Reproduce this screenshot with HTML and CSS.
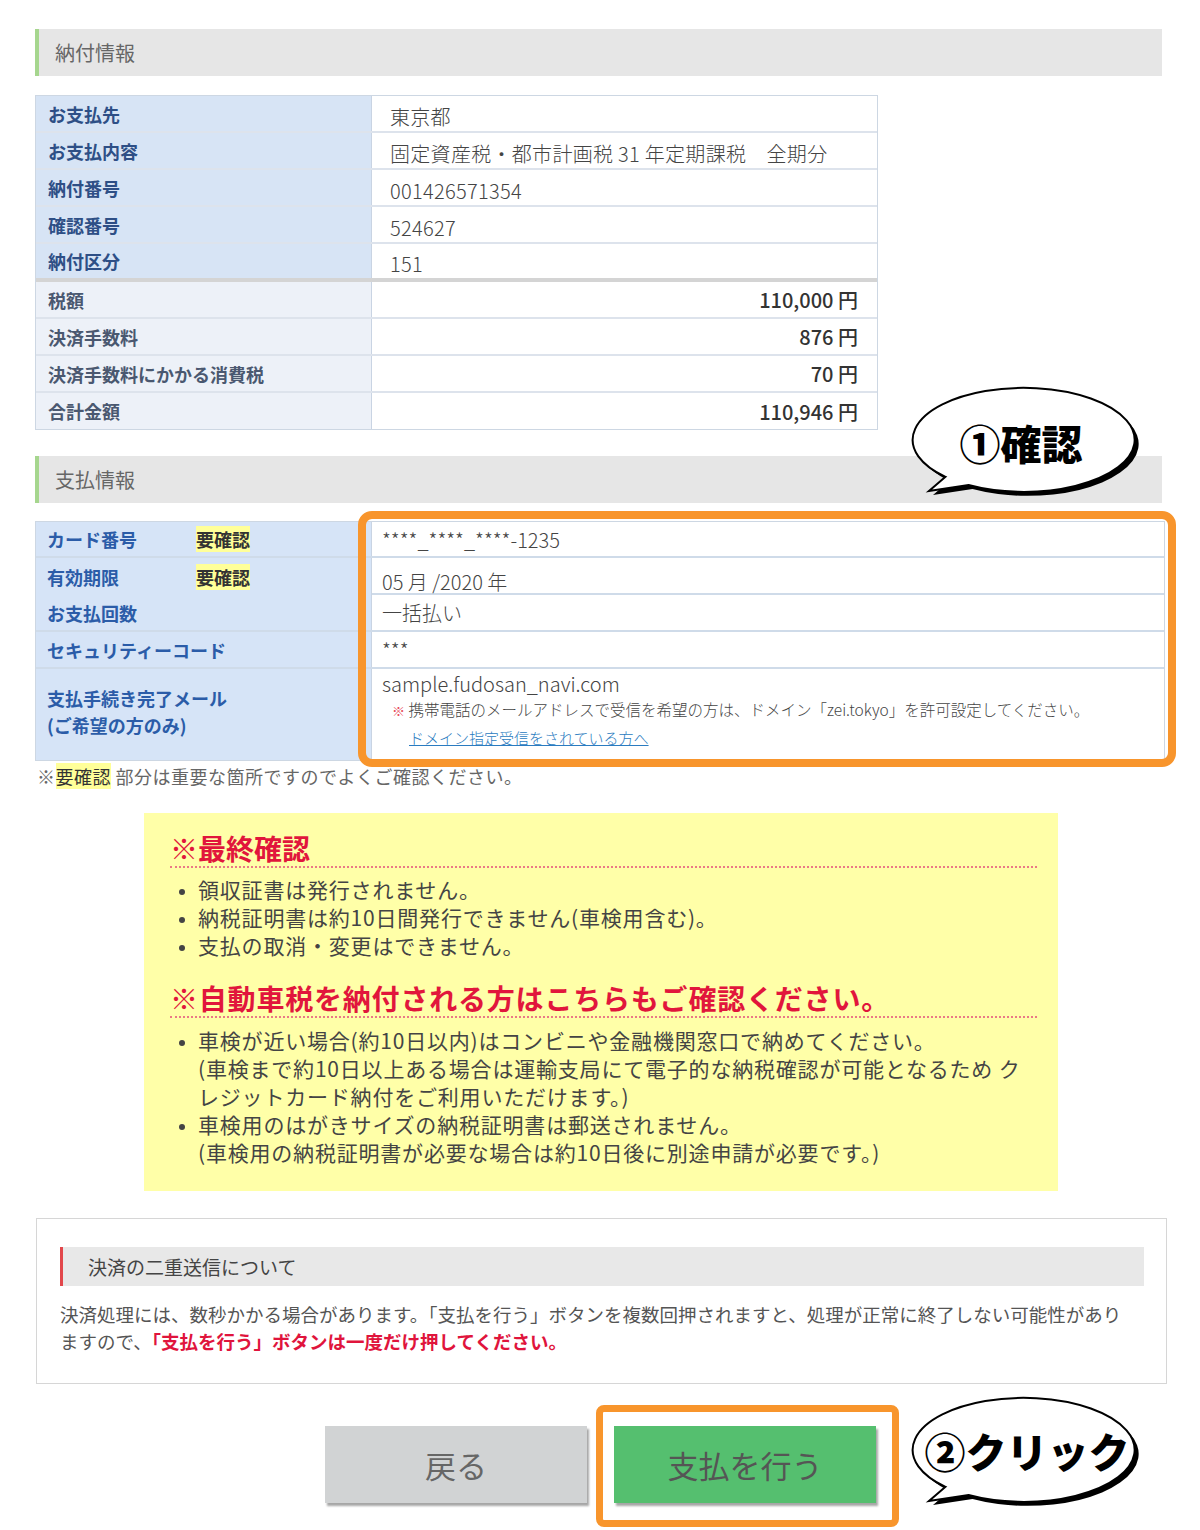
FILE: index.html
```html
<!DOCTYPE html>
<html lang="ja">
<head>
  <meta charset="UTF-8" />
  <meta name="viewport" content="width=device-width, initial-scale=1.0" />
  <title>お支払い内容の確認</title>
  <link rel="stylesheet" href="styles.css">
</head>
<body>
<div class="page">

  <h2 class="sec-title">納付情報</h2>
  <div class="info">
    <div class="row"><div class="key">お支払先</div><div class="val">東京都</div></div>
    <div class="row"><div class="key">お支払内容</div><div class="val">固定資産税・都市計画税 31 年定期課税　全期分</div></div>
    <div class="row"><div class="key">納付番号</div><div class="val">001426571354</div></div>
    <div class="row"><div class="key">確認番号</div><div class="val">524627</div></div>
    <div class="row split"><div class="key">納付区分</div><div class="val">151</div></div>
    <div class="row sum"><div class="key">税額</div><div class="val">110,000 円</div></div>
    <div class="row sum"><div class="key">決済手数料</div><div class="val">876 円</div></div>
    <div class="row sum"><div class="key">決済手数料にかかる消費税</div><div class="val">70 円</div></div>
    <div class="row sum end"><div class="key">合計金額</div><div class="val">110,946 円</div></div>
  </div>

  <h2 class="sec-title second">支払情報</h2>
  <div class="pay-wrap">
    <div class="card">
      <div class="row r1"><div class="key"><span class="name">カード番号</span><span class="must">要確認</span></div><div class="val">****_****_****-1235</div></div>
      <div class="row"><div class="key"><span class="name">有効期限</span><span class="must">要確認</span></div><div class="val low">05 月 /2020 年</div></div>
      <div class="row"><div class="key">お支払回数</div><div class="val">一括払い</div></div>
      <div class="row"><div class="key">セキュリティーコード</div><div class="val">***</div></div>
      <div class="row mail end">
        <div class="key">支払手続き完了メール<br>(ご希望の方のみ)</div>
        <div class="val">
          <div class="addr">sample.fudosan_navi.com</div>
          <div class="hint"><span class="kome">※</span> 携帯電話のメールアドレスで受信を希望の方は、ドメイン「zei.tokyo」を許可設定してください。</div>
          <a class="hint-link" href="#">ドメイン指定受信をされている方へ</a>
        </div>
      </div>
    </div>
    <div class="check-frame"></div>
  </div>
  <p class="remark">※<span class="must">要確認</span> 部分は重要な箇所ですのでよくご確認ください。</p>

  <div class="final">
    <h3>※最終確認</h3>
    <ul>
      <li>領収証書は発行されません。</li>
      <li>納税証明書は約10日間発行できません(車検用含む)。</li>
      <li>支払の取消・変更はできません。</li>
    </ul>
    <h3 class="next">※自動車税を納付される方はこちらもご確認ください。</h3>
    <ul class="car">
      <li>車検が近い場合(約10日以内)はコンビニや金融機関窓口で納めてください。<br>(車検まで約10日以上ある場合は運輸支局にて電子的な納税確認が可能となるため ク<br>レジットカード納付をご利用いただけます。)</li>
      <li>車検用のはがきサイズの納税証明書は郵送されません。<br>(車検用の納税証明書が必要な場合は約10日後に別途申請が必要です。)</li>
    </ul>
  </div>

  <div class="notice">
    <h4>決済の二重送信について</h4>
    <p>決済処理には、数秒かかる場合があります。「支払を行う」ボタンを複数回押されますと、処理が正常に終了しない可能性があり<br>ますので、<strong>「支払を行う」ボタンは一度だけ押してください。</strong></p>
  </div>

  <div class="actions">
    <button class="btn back" type="button">戻る</button>
    <div class="pay-frame"><button class="btn pay" type="button">支払を行う</button></div>
  </div>

  <!-- callouts -->
  <svg class="bubble b1" width="245" height="118" viewBox="0 0 245 118">
    <path d="M40.5 91.8 A111 52 0 1 1 63.5 100 L24 106 Z" fill="#000" transform="translate(4 4)"/>
    <path d="M40.5 91.8 A111 52 0 1 1 63.5 100 L24 106 Z" fill="#fff" stroke="#000" stroke-width="2"/>
    <text class="bubble-text" x="116" y="57" text-anchor="middle" dominant-baseline="central">①確認</text>
  </svg>
  <svg class="bubble b2" width="245" height="118" viewBox="0 0 245 118">
    <path d="M40.5 91.8 A111 52 0 1 1 63.5 100 L24 106 Z" fill="#000" transform="translate(4 4)"/>
    <path d="M40.5 91.8 A111 52 0 1 1 63.5 100 L24 106 Z" fill="#fff" stroke="#000" stroke-width="2"/>
    <text class="bubble-text" x="122" y="55" text-anchor="middle" dominant-baseline="central">②クリック</text>
  </svg>

</div>
</body>
</html>
```

FILE: styles.css
```css
body {
  margin: 0;
  background: #fff;
  font-family: "Noto Sans CJK JP", sans-serif;
  color: #444;
}
.page {
  position: relative;
  width: 1200px;
  padding: 29px 0 40px 35px;
  box-sizing: border-box;
}
.sec-title {
  margin: 0;
  width: 1127px;
  height: 47px;
  box-sizing: border-box;
  background: #e6e6e6;
  border-left: 4px solid #a6d68e;
  padding-left: 16px;
  font-size: 20px;
  font-weight: 400;
  line-height: 47px;
  color: #666;
}
.sec-title.second {
  margin-top: 26px;
}

/* tables */
.info, .card {
  border: 1px solid #cdd7e3;
  box-sizing: border-box;
}
.info {
  width: 843px;
  margin-top: 19px;
}
.row {
  display: grid;
  grid-template-columns: 336px 1fr;
  height: 37px;
  box-sizing: border-box;
  border-bottom: 2px solid #dde3ec;
}
.row.end {
  height: 36px;
  border-bottom: none;
}
.row.split {
  height: 38px;
  border-bottom: 4px solid #d4d4d4;
}
.key {
  display: flex;
  align-items: center;
  padding-left: 12px;
  background: #d7e4f5;
  border-right: 1px solid #c9d4e3;
  font-size: 18px;
  font-weight: 700;
  color: #2e4f86;
}
.val {
  display: flex;
  align-items: center;
  padding: 5px 0 0 18px;
  font-size: 20px;
  font-weight: 300;
  letter-spacing: 0.3px;
  color: #444;
}
.row.sum .key {
  background: #edf1f8;
  color: #4a5870;
}
.row.sum .val {
  justify-content: flex-end;
  padding: 0 19px 0 0;
  font-weight: 500;
  letter-spacing: 0;
  color: #333;
}

.pay-wrap {
  position: relative;
  margin-top: 18px;
}
.card {
  width: 1130px;
}
.card .row {
  border-bottom-color: #cfdbe9;
}
.card .row.r1 {
  height: 36px;
}
.card .key {
  padding-left: 11px;
  background: #d6e4f7;
  color: #2b5ca8;
}
.card .val {
  padding: 0 0 0 10px;
  letter-spacing: 0;
}
.card .val.low {
  padding-top: 9px;
}
.name {
  display: inline-block;
  width: 149px;
}
.must {
  background: #ffff99;
  color: #333;
}
.card .row.mail {
  height: 91px;
}
.row.mail .key {
  padding-bottom: 5px;
  line-height: 27px;
}
.row.mail .val {
  display: block;
  padding-top: 0;
}
.addr {
  line-height: 30px;
}
.hint {
  padding-left: 10px;
  font-size: 15.5px;
  line-height: 20px;
  color: #444;
}
.kome {
  color: #e74c5a;
  font-size: 13px;
}
.hint-link {
  display: inline-block;
  margin-left: 27px;
  font-size: 15px;
  line-height: 24px;
  color: #2a7bc0;
}
.check-frame {
  position: absolute;
  left: 323px;
  top: -10px;
  width: 818px;
  height: 256px;
  box-sizing: border-box;
  border: 8px solid #f8952c;
  border-radius: 14px;
}
.remark {
  margin: 3px 0 0 2px;
  font-size: 18px;
  line-height: 24px;
  letter-spacing: 0.5px;
  color: #666;
}

/* final check box */
.final {
  width: 914px;
  margin: 25px 0 0 109px;
  padding: 17px 21px 25px 26px;
  box-sizing: border-box;
  background: #ffffa8;
}
.final h3 {
  margin: 0;
  font-size: 28px;
  line-height: 36px;
  font-weight: 700;
  color: #e1163c;
  border-bottom: 2px dotted #ea7a86;
}
.final h3.next {
  margin-top: 21px;
  letter-spacing: 0.8px;
}
.final ul {
  margin: 7px 0 0;
  padding-left: 28px;
}
.final ul.car {
  margin-top: 8px;
}
.final li {
  font-size: 21px;
  line-height: 28px;
  letter-spacing: 0.8px;
  color: #444;
}
.final li::marker {
  font-size: 16px;
}

/* notice */
.notice {
  width: 1131px;
  margin: 27px 0 0 1px;
  padding: 28px 22px 28px 23px;
  box-sizing: border-box;
  border: 1px solid #d6d6d6;
}
.notice h4 {
  margin: 0;
  height: 39px;
  background: #e8e8e8;
  border-left: 3px solid #e2474b;
  padding-left: 25px;
  font-size: 19px;
  font-weight: 400;
  line-height: 39px;
  color: #444;
}
.notice p {
  margin: 15px 0 0;
  font-size: 18.5px;
  line-height: 27px;
  color: #555;
}
.notice strong {
  color: #e0143c;
}

/* buttons */
.actions {
  display: flex;
  align-items: flex-start;
  margin-top: 21px;
  padding-left: 290px;
}
.btn {
  width: 262px;
  height: 77px;
  border: none;
  font-family: inherit;
  font-size: 31px;
  box-shadow: 2px 3px 2px rgba(0,0,0,0.35);
}
.btn.back {
  margin-top: 21px;
  background: #d1d3d4;
  color: #666;
}
.pay-frame {
  margin-left: 9px;
  padding: 14px 16px 17px 11px;
  border: 7px solid #f8952c;
  border-radius: 8px;
}
.btn.pay {
  display: block;
  background: #55bf6f;
  color: #555;
}

/* callouts */
.bubble {
  position: absolute;
  left: 905px;
}
.b1 {
  top: 385px;
}
.b2 {
  top: 1395px;
}
.bubble-text {
  font-family: "Noto Sans CJK JP", sans-serif;
  font-size: 41px;
  font-weight: 900;
  fill: #000;
}
```
